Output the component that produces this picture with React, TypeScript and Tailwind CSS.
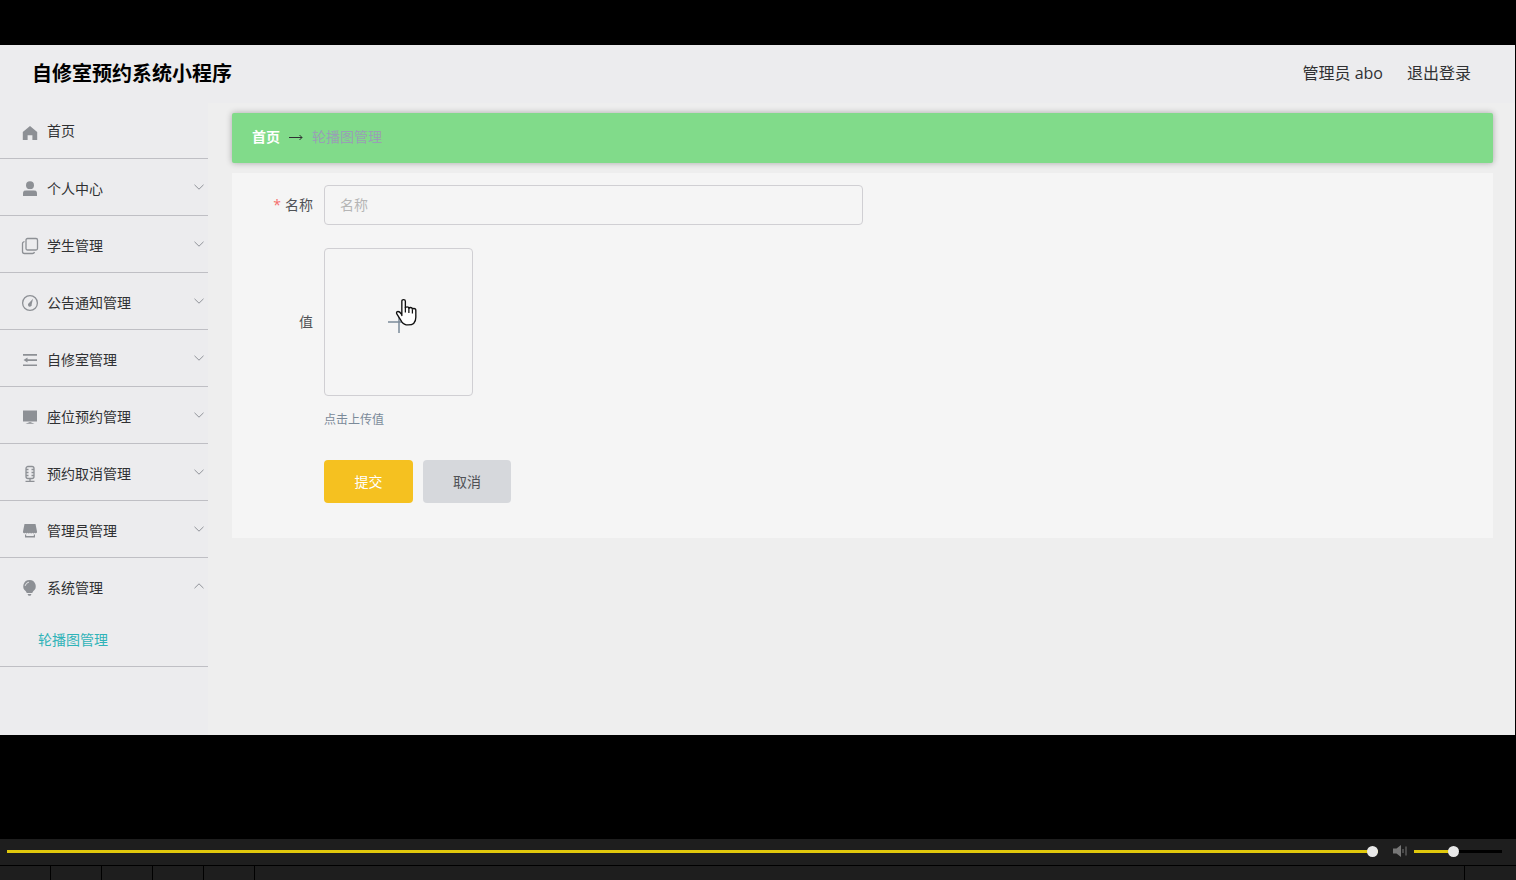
import { useState, type CSSProperties, type FC, type ReactNode } from 'react';

interface MenuEntry {
  title: string;
  icon: ReactNode;
  children?: string[];
  open?: boolean;
}

const Icon: FC<{ children: ReactNode }> = ({ children }) => (
  <svg viewBox="0 0 18 18" className="h-[18px] w-[18px] shrink-0 text-[#8d9095]" fill="currentColor" aria-hidden="true">
    {children}
  </svg>
);

const menu: MenuEntry[] = [
  {
    title: '个人中心',
    icon: (
      <Icon>
        <circle cx="9" cy="5.200" r="4" />
        <path d="M2 16v-2.500c0-2 1.200-3.200 3.200-3.200h7.600c2 0 3.200 1.200 3.200 3.200V16z" />
        <path d="M4 9.800h10" stroke="#ececee" strokeWidth="1" />
      </Icon>
    ),
  },
  {
    title: '学生管理',
    icon: (
      <Icon>
        <g fill="none" stroke="currentColor" strokeWidth="1.300">
          <rect x="5" y="1.500" width="11.500" height="11.500" rx="1.500" />
          <path d="M3.500 4.500 2.500 5q-1 .5-1 1.500v8q0 2 2 2h8q1.500 0 2-1.500" />
        </g>
      </Icon>
    ),
  },
  {
    title: '公告通知管理',
    icon: (
      <Icon>
        <circle cx="9" cy="9" r="7.400" fill="none" stroke="currentColor" strokeWidth="1.300" />
        <path d="M12 4.800 10.700 10.300a1.900 1.900 0 1 1-2.700-1.200z" />
      </Icon>
    ),
  },
  {
    title: '自修室管理',
    icon: (
      <Icon>
        <path d="M2 3h14v1.700H2zM6 8.200h10v1.700H6zM2 13.400h14v1.700H2zM2.500 9 6.500 6.600v4.800z" />
      </Icon>
    ),
  },
  {
    title: '座位预约管理',
    icon: (
      <Icon>
        <path d="M2 2.500h14v11H2zM9 14l4.500 1.800h-9z" />
      </Icon>
    ),
  },
  {
    title: '预约取消管理',
    icon: (
      <Icon>
        <g fill="none" stroke="currentColor" strokeWidth="1.300">
          <rect x="5" y="1.500" width="8" height="12" rx="2" />
          <path d="M9 13.500v2.500M4.500 16.400h9M5 4.500h2.500M10.500 4.500H13M5 7.500h2.500M10.500 7.500H13M5 10.500h2.500M10.500 10.500H13" />
        </g>
      </Icon>
    ),
  },
  {
    title: '管理员管理',
    icon: (
      <Icon>
        <path d="M3.500 2h11L16 9.500v1q-1.200 1.500-2.400.2-1.100 1.400-2.300 0-1.100 1.400-2.300 0-1.200 1.400-2.300 0-1.200 1.400-2.300 0-1.200 1.300-2.400-.2v-1z" />
        <path d="M4 12.500h1.200v1.500h7.600v-1.500H14v3H4z" />
      </Icon>
    ),
  },
  {
    title: '系统管理',
    icon: (
      <Icon>
        <path d="M8.500 1a6.200 6.200 0 0 0-3.700 11.200l1 1.800h5.400l1-1.800A6.200 6.200 0 0 0 8.500 1zM6.500 15h4l-1 1.800h-2z" />
        <path d="M4.200 6.500Q5 3.700 7.500 3.200" fill="none" stroke="#ececee" strokeWidth="1" strokeLinecap="round" />
      </Icon>
    ),
    children: ['轮播图管理'],
    open: true,
  },
];

const Chevron: FC<{ up?: boolean }> = ({ up }) => (
  <svg viewBox="0 0 10 6" className="h-[6px] w-[10px]" fill="none" stroke="#909399" strokeWidth="1" aria-hidden="true">
    <path d={up ? 'M.5 5.200 5 .8l4.500 4.400' : 'M.5.8 5 5.200 9.500.8'} />
  </svg>
);

const Sidebar: FC = () => (
  <nav className="w-[208px] shrink-0 bg-[#ececee] text-sm text-[#303133]">
    <ul>
      <li className="border-b border-[#bfbfc4]">
        <a href="#home" className="flex h-[55px] items-center pl-[21px]">
          <span className="pt-1">
            <Icon>
              <path d="M9 2 1.800 8v8H6.600v-4.800h4.800V16h4.800V8z" />
            </Icon>
          </span>
          <span className="pl-2">首页</span>
        </a>
      </li>
      {menu.map((item) => (
        <li key={item.title} className="border-b border-[#bfbfc4]">
          <button type="button" className="flex h-14 w-full cursor-pointer items-center pr-1 pl-[21px]">
            <span className="flex flex-1 items-center gap-2 pt-1">
              {item.icon}
              {item.title}
            </span>
            <Chevron up={item.open} />
          </button>
          {item.open &&
            item.children?.map((child) => (
              <a key={child} href="#banner" className="flex h-[52px] items-center pl-[38px] text-[#2fb3b8]">
                {child}
              </a>
            ))}
        </li>
      ))}
    </ul>
  </nav>
);

const Breadcrumb: FC = () => (
  <div className="flex h-[50px] items-center rounded-xs bg-[#81db8a] px-5 pb-[2px] text-sm shadow-[0_0_6px_rgba(0,0,0,0.3)]">
    <a href="#home" className="font-bold text-white">
      首页
    </a>
    <svg viewBox="0 0 14 8" className="mx-[9px] h-2 w-[14px]" fill="none" stroke="#303133" aria-hidden="true">
      <path d="M0 4.500h13M10.500 2 13 4.500 10.500 7" />
    </svg>
    <span className="text-[#999fb5]">轮播图管理</span>
  </div>
);

const HandCursor: FC = () => (
  <svg viewBox="0 0 22 28" className="absolute top-[49px] left-[70px] h-[29px] w-[23px]" aria-hidden="true">
    <path
      d="M6.500 17V3.200q0-1.700 1.700-1.700t1.700 1.700v6.300q.3-1 1.600-1 1.800 0 1.800 1.500.4-.8 1.600-.8 1.700 0 1.800 1.500.4-.6 1.500-.6 1.800 0 1.800 1.900v6.500q0 7.500-7.500 7.500-4 0-6-3l-4.700-7.500q-1-1.600.4-2.300 1.800-.8 4.300 2.800z"
      fill="#fff"
      stroke="#111"
      strokeWidth="1.300"
      strokeLinejoin="round"
    />
    <path d="M9.900 9v5M13.300 10v4.500M16.700 11v4" fill="none" stroke="#111" strokeWidth="1.200" />
  </svg>
);

const BannerForm: FC = () => (
  <form className="mt-[10px] bg-[#f5f5f5] pt-3 pb-[35px] text-sm text-[#505256]" onSubmit={(e) => e.preventDefault()}>
    <div className="flex items-center">
      <label htmlFor="name" className="w-[92px] shrink-0 pr-[11px] text-right">
        <span className="pr-1 text-[#f56c6c]">*</span>
        名称
      </label>
      <input
        id="name"
        type="text"
        placeholder="名称"
        className="h-10 w-[539px] rounded-sm border border-[#d0cfd3] bg-transparent px-[15px] pb-[2px] outline-none placeholder:text-[#b5b5b5]"
      />
    </div>

    <div className="mt-[23px] flex items-center">
      <span id="value-label" className="w-[92px] shrink-0 pr-[11px] text-right">
        值
      </span>
      <button
        type="button"
        aria-labelledby="value-label"
        className="relative flex h-[148px] w-[149px] cursor-pointer items-center justify-center rounded-sm border border-[#d0cfd3]"
      >
        <svg viewBox="0 0 22 22" className="h-[22px] w-[22px]" stroke="#7b8a99" strokeWidth="1.500" aria-hidden="true">
          <path d="M0 11h22M11 0v22" />
        </svg>
        <HandCursor />
      </button>
    </div>
    <p className="mt-3 pl-[92px] text-xs leading-6 text-[#7b8a99]">点击上传值</p>

    <div className="mt-7 flex gap-[10px] pl-[92px]">
      <button type="submit" className="h-[43px] w-[89px] cursor-pointer rounded-sm bg-[#f5c120] text-white">
        提交
      </button>
      <button type="button" className="h-[43px] w-[88px] cursor-pointer rounded-sm bg-[#d6d8dc] text-[#505256]">
        取消
      </button>
    </div>
  </form>
);

interface TrackProps {
  label: string;
  initial: number;
  max: number;
  className: string;
}

const Track: FC<TrackProps> = ({ label, initial, max, className }) => {
  const [value, setValue] = useState(initial);
  const done = `${(value / max) * 100}%`;
  const fill: CSSProperties = {
    backgroundImage: `linear-gradient(to right, #e0c80c ${done}, #000 ${done})`,
  };

  return (
    <input
      type="range"
      aria-label={label}
      min={0}
      max={max}
      value={value}
      onChange={(e) => setValue(Number(e.target.value))}
      style={fill}
      className={`h-[3px] cursor-pointer appearance-none [&::-webkit-slider-thumb]:h-[11px] [&::-webkit-slider-thumb]:w-[11px] [&::-webkit-slider-thumb]:appearance-none [&::-webkit-slider-thumb]:rounded-full [&::-webkit-slider-thumb]:bg-[#e8e8e8] ${className}`}
    />
  );
};

const PlayerBar: FC = () => (
  <footer className="bg-[#1e1e1e]">
    <div className="flex h-[26px] items-center pr-[14px] pb-[2px] pl-[7px]">
      <Track label="进度" initial={100} max={100} className="min-w-0 flex-1" />
      <svg viewBox="0 0 16 14" className="mr-[6px] ml-[14px] h-[14px] w-4 shrink-0" fill="#777" aria-hidden="true">
        <path d="M1 4.500h3.500L9 1v12L4.500 9.500H1zM10.500 5h1v4h-1z" />
        <path d="M13.500 2.500h1v9h-1z" />
      </svg>
      <Track label="音量" initial={44} max={100} className="w-[88px]" />
    </div>
    <div className="flex h-[15px] border-t border-black pr-px">
      {[1, 2, 3, 4, 5].map((cell) => (
        <div key={cell} className="w-[51px] border-r border-black" />
      ))}
      <div className="flex-1 border-r border-black" />
      <div className="w-[50px]" />
    </div>
  </footer>
);

const App: FC = () => (
  <div className="flex min-h-screen flex-col bg-black font-['Open_Sans','Noto_Sans_CJK_SC',sans-serif]">
    <div className="flex-1 pt-[45px] pr-px pb-[104px]">
      <div className="flex min-h-[690px] flex-col bg-[#eeeeee]">
        <header className="flex h-[58px] items-center justify-between bg-[#ececee] pr-11 pl-8">
          <h1 className="text-xl font-bold text-black">自修室预约系统小程序</h1>
          <div className="flex gap-6 pb-[2px] text-base text-[#303133]">
            <span>管理员 abo</span>
            <a href="#logout">退出登录</a>
          </div>
        </header>
        <div className="flex flex-1">
          <Sidebar />
          <main className="min-w-0 flex-1 pt-[10px] pr-[22px] pl-6">
            <Breadcrumb />
            <BannerForm />
          </main>
        </div>
      </div>
    </div>
    <PlayerBar />
  </div>
);

export default App;
